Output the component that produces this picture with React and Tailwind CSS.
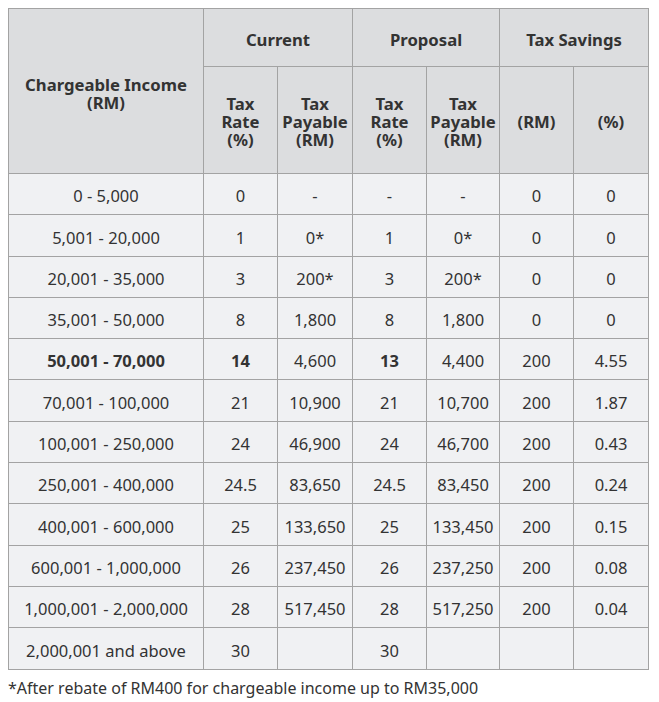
import React from "react";

const rows = [
  ["0 - 5,000", "0", "-", "-", "-", "0", "0"],
  ["5,001 - 20,000", "1", "0*", "1", "0*", "0", "0"],
  ["20,001 - 35,000", "3", "200*", "3", "200*", "0", "0"],
  ["35,001 - 50,000", "8", "1,800", "8", "1,800", "0", "0"],
  ["50,001 - 70,000", "14", "4,600", "13", "4,400", "200", "4.55", true],
  ["70,001 - 100,000", "21", "10,900", "21", "10,700", "200", "1.87"],
  ["100,001 - 250,000", "24", "46,900", "24", "46,700", "200", "0.43"],
  ["250,001 - 400,000", "24.5", "83,650", "24.5", "83,450", "200", "0.24"],
  ["400,001 - 600,000", "25", "133,650", "25", "133,450", "200", "0.15"],
  ["600,001 - 1,000,000", "26", "237,450", "26", "237,250", "200", "0.08"],
  ["1,000,001 - 2,000,000", "28", "517,450", "28", "517,250", "200", "0.04"],
  ["2,000,001 and above", "30", "", "30", "", "", ""],
];

// bold cells in the highlighted row: income, current rate, proposal rate
const boldCols = [0, 1, 3];

const th = "border border-[#a3a3a3] bg-[#dcdddf] font-bold text-center align-middle leading-[18px] px-0 text-[16.7px]";
const td = "border border-[#a3a3a3] bg-[#f0f1f3] text-center align-middle h-[41.3px] p-0 pt-[5px]";

export default function App() {
  return (
    <div
      className="bg-white pt-2 px-2 text-[#333] text-[16.5px]"
      style={{ fontFamily: '"Noto Sans", "Open Sans", sans-serif' }}
    >
      <table className="border-collapse table-fixed w-[640px]">
        <colgroup>
          <col className="w-[195px]" />
          <col className="w-[74px]" />
          <col className="w-[75px]" />
          <col className="w-[74px]" />
          <col className="w-[73px]" />
          <col className="w-[74px]" />
          <col className="w-[75px]" />
        </colgroup>
        <thead>
          <tr className="h-[58px]">
            <th rowSpan={2} className={th + " pt-[5px]"}>
              Chargeable Income
              <br />
              (RM)
            </th>
            <th colSpan={2} className={th + " pt-[4px]"}>Current</th>
            <th colSpan={2} className={th + " pt-[4px]"}>Proposal</th>
            <th colSpan={2} className={th + " pt-[4px]"}>Tax Savings</th>
          </tr>
          <tr className="h-[107px]">
            <th className={th + " pt-[4px]"}>Tax<br />Rate<br />(%)</th>
            <th className={th + " pt-[4px]"}>Tax<br />Payable<br />(RM)</th>
            <th className={th + " pt-[4px]"}>Tax<br />Rate<br />(%)</th>
            <th className={th + " pt-[4px]"}>Tax<br />Payable<br />(RM)</th>
            <th className={th + " pt-[4px]"}>(RM)</th>
            <th className={th + " pt-[4px]"}>(%)</th>
          </tr>
        </thead>
        <tbody>
          {rows.map((r, i) => (
            <tr key={i}>
              {r.slice(0, 7).map((c, j) => (
                <td
                  key={j}
                  className={td + (r[7] && boldCols.includes(j) ? " font-bold" : "")}
                >
                  {c}
                </td>
              ))}
            </tr>
          ))}
        </tbody>
      </table>
      <p className="mt-[6px] text-[16px]">
        *After rebate of RM400 for chargeable income up to RM35,000
      </p>
    </div>
  );
}
